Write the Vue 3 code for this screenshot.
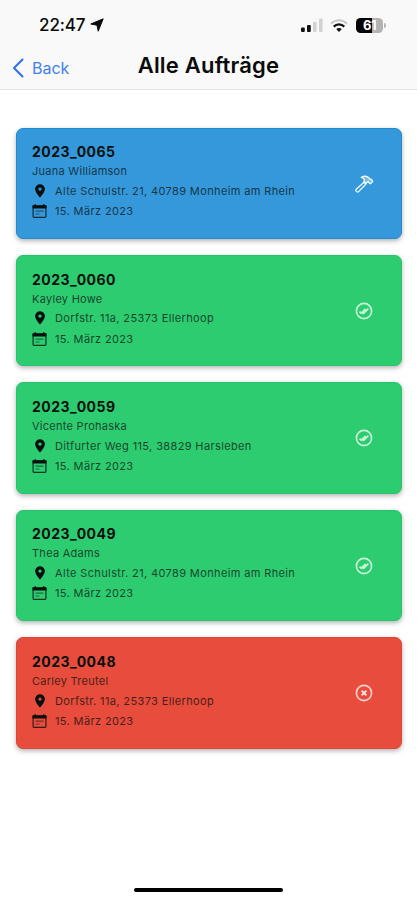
<script setup>
const orders = [
  { id: '2023_0065', name: 'Juana Williamson', address: 'Alte Schulstr. 21, 40789 Monheim am Rhein', date: '15. März 2023', status: 'active' },
  { id: '2023_0060', name: 'Kayley Howe', address: 'Dorfstr. 11a, 25373 Ellerhoop', date: '15. März 2023', status: 'done' },
  { id: '2023_0059', name: 'Vicente Prohaska', address: 'Ditfurter Weg 115, 38829 Harsleben', date: '15. März 2023', status: 'done' },
  { id: '2023_0049', name: 'Thea Adams', address: 'Alte Schulstr. 21, 40789 Monheim am Rhein', date: '15. März 2023', status: 'done' },
  { id: '2023_0048', name: 'Carley Treutel', address: 'Dorfstr. 11a, 25373 Ellerhoop', date: '15. März 2023', status: 'failed' },
]
</script>

<template>
  <div class="screen">
    <header class="header">
      <div class="status-bar">
        <div class="clock">
          <span class="time">22:47</span>
          <svg class="location" viewBox="0 0 14 14"><path d="M13.2.8 8.2 13.2 7 7.2.8 6z" fill="#0b0b0b" stroke="#0b0b0b" stroke-width="1" stroke-linejoin="round" /></svg>
        </div>
        <div class="indicators">
          <svg class="signal" viewBox="0 0 22 14">
            <rect x="0" y="9.5" width="3.8" height="4.5" rx="1" fill="#111" />
            <rect x="6" y="7" width="3.8" height="7" rx="1" fill="#111" />
            <rect x="12" y="3.8" width="3.6" height="10.2" rx="1" fill="#d2d2d2" />
            <rect x="18" y="0.5" width="3.6" height="13.5" rx="1" fill="#d2d2d2" />
          </svg>
          <svg class="wifi" viewBox="0 0 18 13" fill="none">
            <path d="M1 4.7C5.5.2 12.5.2 17 4.7" stroke="#c9c9c9" stroke-width="2" />
            <path d="M3.7 7.6C6.7 4.6 11.3 4.6 14.3 7.6" stroke="#111" stroke-width="2.2" />
            <path d="M6.2 10.1Q9 7.7 11.8 10.1L9 12.9z" fill="#111" />
          </svg>
          <div class="battery-group">
            <div class="battery">61</div>
            <div class="battery-tip"></div>
          </div>
        </div>
      </div>
      <nav class="navbar">
        <a class="back">
          <svg viewBox="0 0 12 20"><path d="M10.5 1.5 2 10l8.5 8.5" fill="none" stroke="#2a73ee" stroke-width="2" stroke-linecap="round" stroke-linejoin="round" /></svg>
          <span>Back</span>
        </a>
        <h1>Alle Aufträge</h1>
        <span></span>
      </nav>
    </header>

    <main class="orders">
      <article v-for="order in orders" :key="order.id" class="card" :class="order.status">
        <div class="details">
          <h2>{{ order.id }}</h2>
          <p class="name">{{ order.name }}</p>
          <div class="line address">
            <svg viewBox="0 0 16 16"><path fill-rule="evenodd" d="M8 1.2a4.9 4.9 0 0 0-4.9 4.9C3.1 9.3 8 14.7 8 14.7s4.900-5.400 4.900-8.600A4.900 4.900 0 0 0 8 1.200zm0 3.200a1.700 1.700 0 1 1 0 3.400 1.700 1.700 0 0 1 0-3.400z" /></svg>
            <span>{{ order.address }}</span>
          </div>
          <div class="line date">
            <svg viewBox="0 0 16 16">
              <path d="M.5 2.300h2V1.300H4v1h7v-1h1.500v1h2v3.200H.5z" />
              <rect x="1.100" y="3" width="12.800" height="11.300" rx="0.800" fill="none" stroke="currentColor" stroke-width="1.200" opacity=".8" />
              <path d="M3.500 8.200h8M3.500 11h4" fill="none" stroke="currentColor" stroke-width="1.200" opacity=".5" />
            </svg>
            <span>{{ order.date }}</span>
          </div>
        </div>
        <svg v-if="order.status === 'active'" class="state" viewBox="0 0 20 20">
          <g fill="none" stroke="#f2faff" stroke-width="1.300" stroke-linejoin="round">
            <path d="M10 8.200 2.200 15.300q-.9.900 0 1.900l.7.600q.9.700 1.700-.2L12 10z" />
            <path d="M7.300 3.400q4.500-2.500 7.800.6l1.200 1.500 1.200-.2 1.300 2.200-2.500 2.300-1.900-1.500-.2-1.100-2.200 2-2.200-2 .8-1.500q-1.400-1.700-3.300-2.300z" fill="#f2faff" fill-opacity=".35" />
          </g>
        </svg>
        <svg v-else-if="order.status === 'done'" class="state" viewBox="0 0 20 20">
          <circle cx="10" cy="10" r="7.600" fill="none" stroke="#c8f8d9" stroke-width="1.600" />
          <path d="m5.500 10.700 1.700 1.500 2.500-2.200M8 11l1.600 1.400 4.700-4.800M9.300 10.200l2.200-2.200" fill="none" stroke="#c8f8d9" stroke-width="1.700" />
        </svg>
        <svg v-else class="state" viewBox="0 0 20 20">
          <circle cx="10" cy="10" r="7.600" fill="none" stroke="#ffd3cb" stroke-width="1.600" />
          <path d="m7.600 7.600 4.800 4.800m0-4.800-4.800 4.800" stroke="#ffe3de" stroke-width="1.900" />
        </svg>
      </article>
    </main>

    <footer class="home"><div></div></footer>
  </div>
</template>

<style>
body {
  background: #fff;
}
</style>

<style scoped>
.screen {
  box-sizing: border-box;
  width: 417px;
  height: 900px;
  display: flex;
  flex-direction: column;
  overflow: hidden;
  background: #fff;
  color: #0b0b0b;
  font-family: Inter, "Liberation Sans", sans-serif;
}
.header {
  box-sizing: border-box;
  height: 90px;
  background: #f9f9f9;
  border-bottom: 1px solid #e2e2e2;
}
.status-bar {
  height: 50px;
  padding: 0 31px 0 39px;
  display: flex;
  justify-content: space-between;
  align-items: center;
}
.clock {
  display: flex;
  align-items: center;
  gap: 5px;
}
.time {
  font-size: 17px;
  line-height: 20px;
  font-weight: 500;
  letter-spacing: -0.1px;
}
.location {
  width: 14px;
  height: 14px;
}
.indicators {
  display: flex;
  align-items: center;
}
.signal {
  width: 22px;
  height: 14px;
}
.wifi {
  width: 18px;
  height: 13px;
  margin: 0 8px 0 7px;
}
.battery-group {
  display: flex;
  align-items: center;
  gap: 1px;
}
.battery {
  width: 27px;
  height: 15px;
  border-radius: 4.5px;
  background: linear-gradient(90deg, #050505 61%, #b3b3b3 61%);
  color: #fff;
  font-size: 13px;
  line-height: 15px;
  font-weight: 700;
  text-align: center;
  letter-spacing: -0.5px;
}
.battery-tip {
  width: 2px;
  height: 5px;
  border-radius: 0 2px 2px 0;
  background: #b8b8b8;
}
.navbar {
  height: 30px;
  padding: 0 12px;
  display: grid;
  grid-template-columns: 1fr auto 1fr;
  align-items: center;
}
.back {
  display: flex;
  align-items: center;
  gap: 8px;
  color: #4381ee;
  font-size: 16px;
  line-height: 20px;
  padding-top: 5px;
}
.back svg {
  width: 12px;
  height: 20px;
}
h1 {
  margin: 0;
  font-size: 22px;
  line-height: 28px;
  font-weight: 600;
  letter-spacing: 0.2px;
}
.orders {
  flex: 1;
  padding: 37.6px 15.5px 0 16px;
  display: flex;
  flex-direction: column;
  gap: 16px;
}
.card {
  box-sizing: border-box;
  height: 111.4px;
  flex: none;
  padding: 13.6px 27px 0 15px;
  display: flex;
  justify-content: space-between;
  border-radius: 7px;
  box-shadow: 0 2px 5px rgba(0, 0, 0, 0.3);
}
.active {
  background: #3498db;
  border: 1px solid #208bd0;
}
.done {
  background: #2ecc71;
  border: 1px solid #28c46b;
}
.failed {
  background: #e74c3c;
  border: 1px solid #dd4636;
}
.details {
  color: #07100d;
}
h2 {
  margin: 0;
  font-size: 14px;
  line-height: 19px;
  font-weight: 700;
  letter-spacing: 0.5px;
}
p {
  margin: 0;
}
.name,
.line span {
  font-size: 11px;
  letter-spacing: 0.27px;
  opacity: 0.72;
}
.name {
  line-height: 20px;
}
.line {
  height: 20px;
  display: flex;
  align-items: center;
  gap: 7px;
}
.line span {
  letter-spacing: 0.37px;
}
.address {
  height: 19.6px;
}
.date {
  height: 21px;
}
.line svg {
  width: 16px;
  height: 16px;
  fill: currentColor;
}
.state {
  width: 20px;
  height: 20px;
  align-self: flex-start;
  margin-top: 31.4px;
}
.home {
  height: 15px;
  display: flex;
  justify-content: center;
}
.home div {
  width: 149px;
  height: 4px;
  margin-top: 3px;
  border-radius: 2px;
  background: #000;
}
</style>
